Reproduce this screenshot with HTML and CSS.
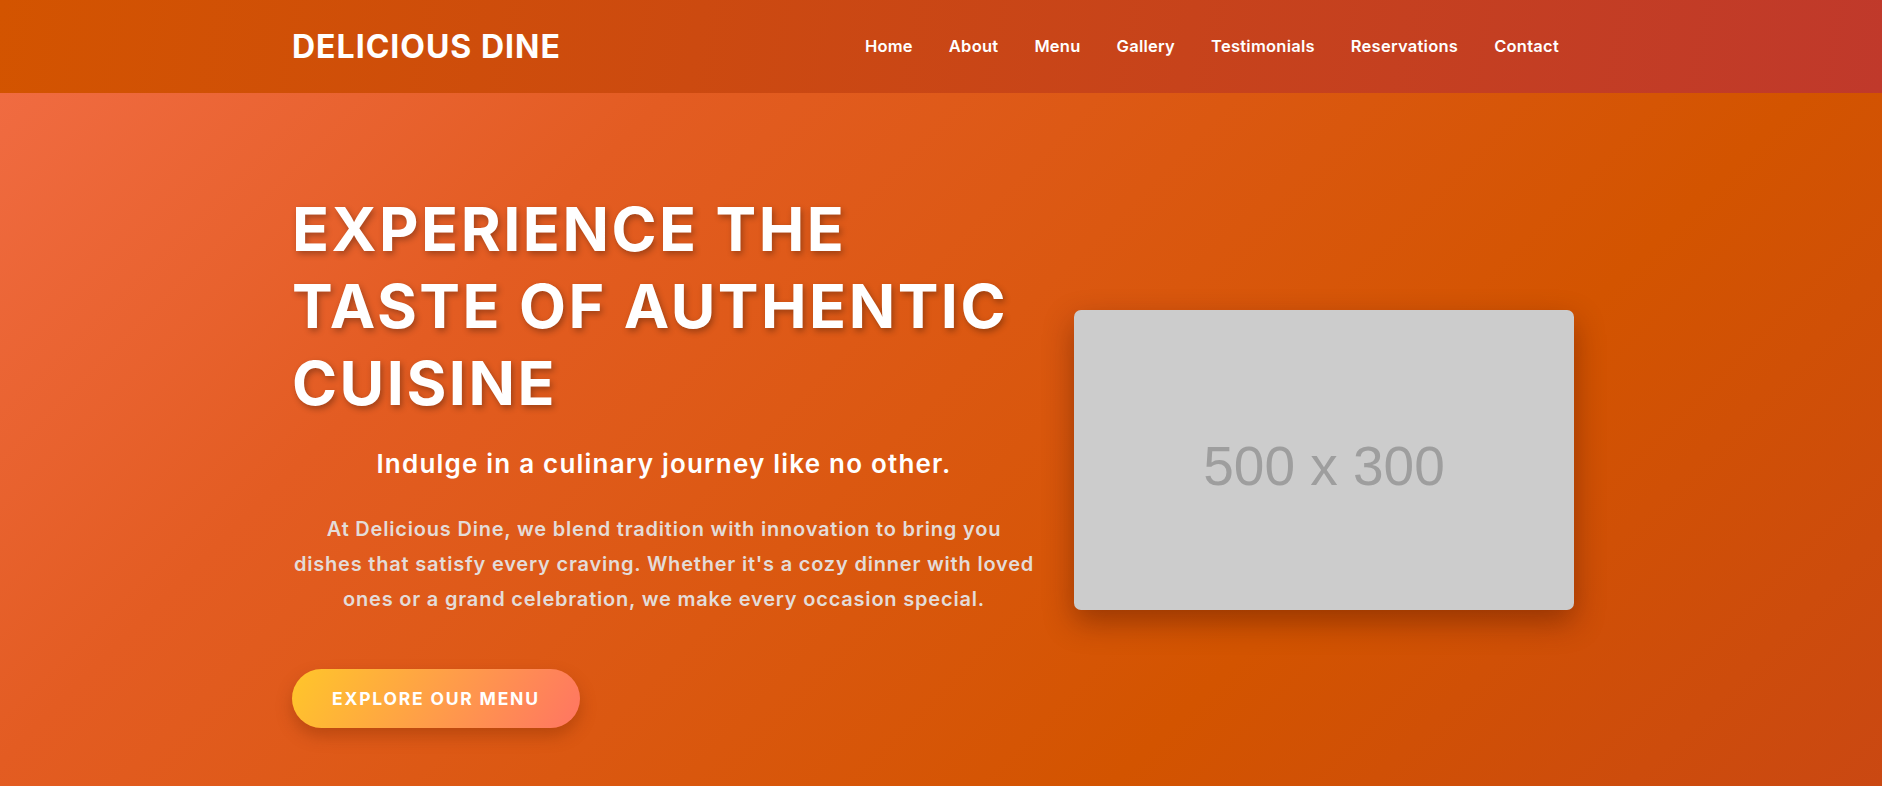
FILE: index.html
```html
<!DOCTYPE html>
<html lang="en">
<head>
<meta charset="UTF-8">
<title>Delicious Dine</title>
<link rel="stylesheet" href="styles.css">
</head>
<body>
<header class="site-header">
  <div class="container header-inner">
    <a class="logo" href="#">DELICIOUS DINE</a>
    <nav class="main-nav">
      <ul class="nav-links">
        <li><a href="#">Home</a></li>
        <li><a href="#">About</a></li>
        <li><a href="#">Menu</a></li>
        <li><a href="#">Gallery</a></li>
        <li><a href="#">Testimonials</a></li>
        <li><a href="#">Reservations</a></li>
        <li><a href="#">Contact</a></li>
      </ul>
    </nav>
  </div>
</header>
<section class="hero">
  <div class="container hero-inner">
    <div class="hero-text">
      <h1 class="hero-title">EXPERIENCE THE<br>TASTE OF AUTHENTIC<br>CUISINE</h1>
      <h2 class="hero-tagline">Indulge in a culinary journey like no other.</h2>
      <p class="hero-desc">At Delicious Dine, we blend tradition with innovation to bring you dishes that satisfy every craving. Whether it's a cozy dinner with loved ones or a grand celebration, we make every occasion special.</p>
      <a class="btn-primary" href="#">EXPLORE OUR MENU</a>
    </div>
    <div class="hero-image">500 x 300</div>
  </div>
</section>
</body>
</html>
```

FILE: styles.css
```css
* {
  box-sizing: border-box;
  margin: 0;
  padding: 0;
}

html, body {
  height: 100%;
  overflow: hidden;
}

body {
  font-family: Inter, "Noto Sans", sans-serif;
  background: #d35400;
  color: #fff;
}

a {
  color: inherit;
  text-decoration: none;
}

.container {
  max-width: 1300px;
  margin: 0 auto;
}

.site-header {
  background: linear-gradient(100deg, #d35400 0%, #c0392b 100%);
  height: 93px;
}

.header-inner {
  height: 100%;
  display: flex;
  align-items: center;
  justify-content: space-between;
  padding-left: 1px;
}

.logo {
  font-size: 32px;
  font-weight: 700;
  letter-spacing: 1px;
  line-height: 1;
}

.main-nav {
  padding-right: 32px;
}

.nav-links {
  list-style: none;
  display: flex;
  gap: 36px;
}

.nav-links a {
  font-size: 16.5px;
  font-weight: 600;
  letter-spacing: 0.25px;
  line-height: 1.5;
}

.hero {
  height: calc(100% - 93px);
  background: linear-gradient(135deg, #f06b41 0%, #e35c22 26%, #d35400 70%, #ca4812 100%);
  padding-top: 98px;
}

.hero-inner {
  display: flex;
  align-items: center;
  gap: 38px;
  padding-left: 1px;
}

.hero-text {
  width: 744px;
  flex-shrink: 0;
}

.hero-title {
  font-size: 61px;
  font-weight: 700;
  line-height: 77px;
  letter-spacing: 2.5px;
  text-shadow: 2px 3px 6px rgba(0, 0, 0, 0.3);
}

.hero-tagline {
  margin-top: 22px;
  text-align: center;
  font-size: 26px;
  font-weight: 600;
  letter-spacing: 1.2px;
  line-height: 39px;
}

.hero-desc {
  margin-top: 29px;
  text-align: center;
  font-size: 20px;
  font-weight: 600;
  letter-spacing: 0.8px;
  line-height: 35px;
  color: #e4dcd8;
}

.btn-primary {
  display: inline-block;
  margin-top: 52px;
  padding: 16px 40px;
  border-radius: 40px;
  background: linear-gradient(120deg, #ffc62a 0%, #ff9e48 50%, #ff7562 100%);
  font-size: 17.5px;
  font-weight: 700;
  letter-spacing: 1.8px;
  line-height: 27px;
  box-shadow: 0 8px 16px rgba(120, 40, 0, 0.35);
}

.hero-image {
  width: 500px;
  height: 300px;
  flex-shrink: 0;
  background: #cccccc;
  border-radius: 7px;
  box-shadow: 0 12px 30px rgba(80, 20, 0, 0.45);
  display: flex;
  align-items: center;
  justify-content: center;
  padding-top: 12px;
  font-family: "Liberation Sans", Arial, sans-serif;
  font-size: 55px;
  color: #9e9e9e;
}
```
